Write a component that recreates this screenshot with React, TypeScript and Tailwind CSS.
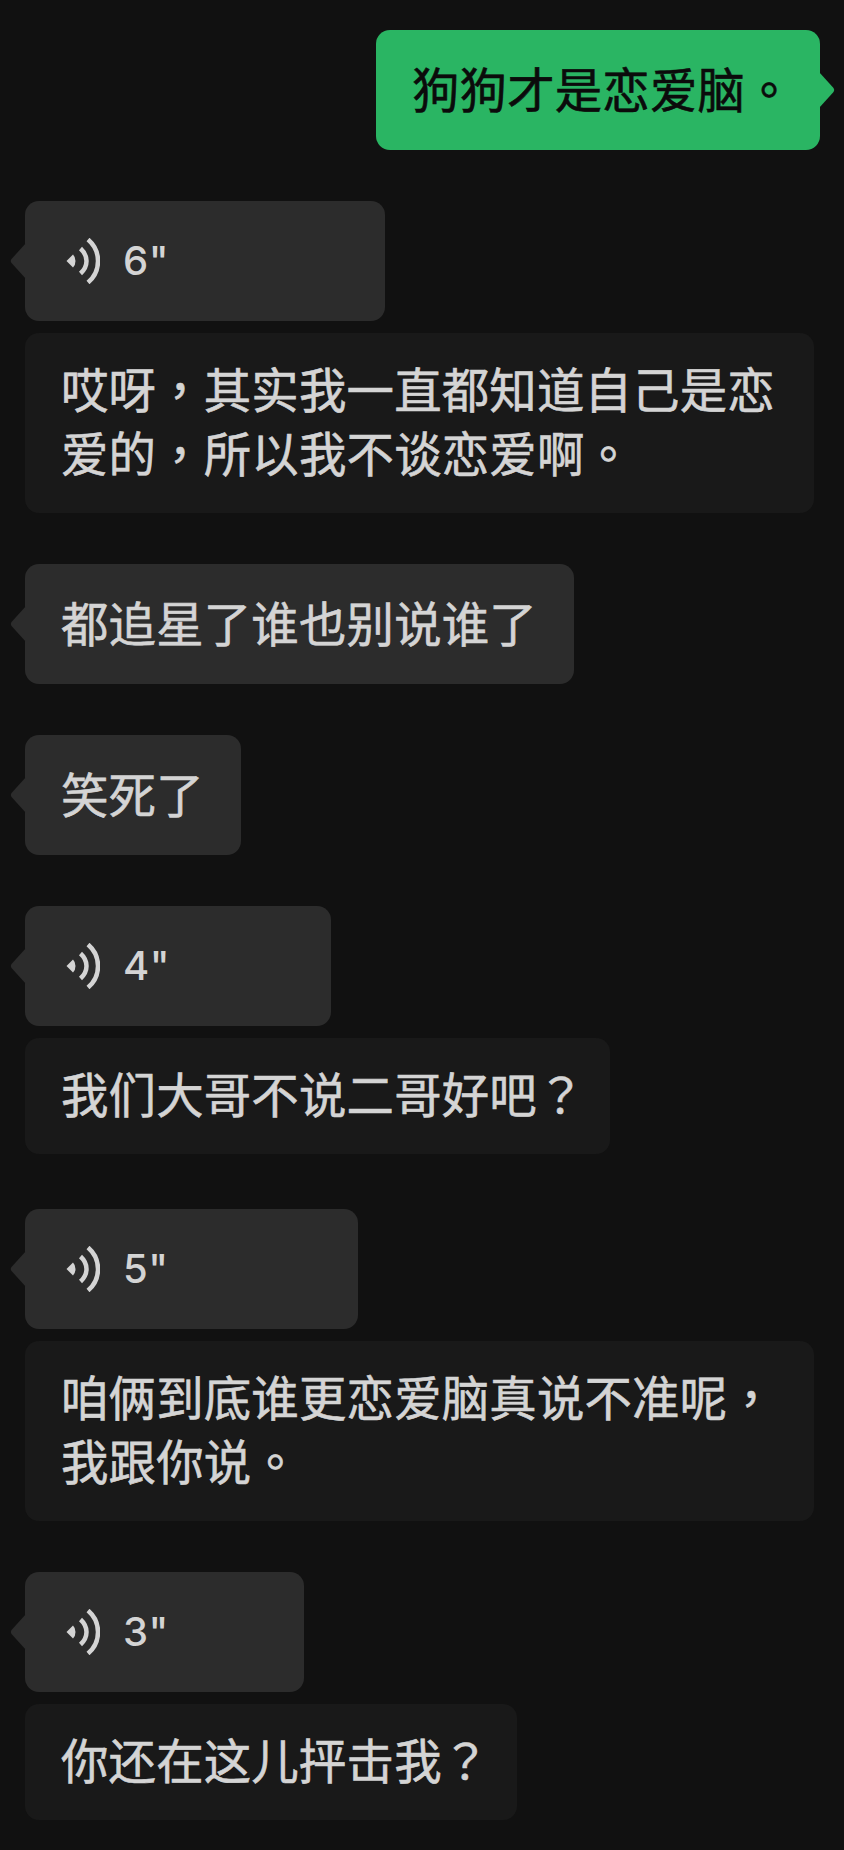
const font = { fontFamily: '"Noto Sans CJK SC", "Noto Sans", sans-serif' };

function Cjk({ text }: { text: string }) {
  const parts = text.split(/([，。？])/);
  return (
    <>
      {parts.map((p, i) =>
        /[，。？]/.test(p) ? (
          <span key={i} className="font-['Noto_Sans_CJK_TC']">{p}</span>
        ) : (
          <span key={i}>{p}</span>
        ),
      )}
    </>
  );
}

function Tail({ side, color }: { side: "left" | "right"; color: string }) {
  return (
    <svg
      width="16"
      height="36"
      viewBox="0 0 16 36"
      className={side === "left" ? "absolute left-[-15px] top-[42px]" : "absolute right-[-15px] top-[42px]"}
    >
      <path
        d={side === "left" ? "M16 0 L1.5 16 Q0 18 1.5 20 L16 36 Z" : "M0 0 L14.5 16 Q16 18 14.5 20 L0 36 Z"}
        fill={color}
      />
    </svg>
  );
}

function Voice({ seconds, width }: { seconds: string; width: string }) {
  return (
    <div className={`relative flex h-[120px] items-center rounded-[14px] bg-[#2c2c2c] pl-[41px] ${width}`}>
      <Tail side="left" color="#2c2c2c" />
      <svg width="34" height="46" viewBox="0 0 34 46" className="shrink-0" fill="none">
        <path d="M0.500 23 L7 16.500 Q9.500 19 9.500 23 Q9.500 27 7 29.500 Z" fill="#d4d4d4" />
        <path d="M14.500 10.500 Q20.500 16 20.500 23 Q20.500 30 14.500 35.500" stroke="#d4d4d4" strokeWidth="4.500" />
        <path d="M22 1.500 Q32 10 32 23 Q32 36 22 44.500" stroke="#d4d4d4" strokeWidth="4.500" />
      </svg>
      <span className="ml-[23px] font-['Inter'] text-[40px] font-medium leading-none tracking-[0.5px] text-[#d4d4d4]">
        {seconds}"
      </span>
    </div>
  );
}

function Text({ lines, width, height }: { lines: string[]; width: string; height: string }) {
  return (
    <div className={`flex flex-col justify-center rounded-[14px] bg-[#191919] pl-[36px] text-[47.400px] font-normal leading-[64px] tracking-[0.2px] text-[#d4d4d4] [-webkit-text-stroke:0.6px_#d4d4d4] ${width} ${height}`}>
      {lines.map((l) => (
        <div key={l} className="mt-[-3px] mb-[3px] whitespace-nowrap"><Cjk text={l} /></div>
      ))}
    </div>
  );
}

function Plain({ text, width }: { text: string; width: string }) {
  return (
    <div className={`relative flex h-[120px] items-center rounded-[14px] bg-[#2c2c2c] pb-[5px] pl-[36px] text-[47.400px] font-normal tracking-[0.2px] text-[#d4d4d4] [-webkit-text-stroke:0.6px_#d4d4d4] ${width}`}>
      <Tail side="left" color="#2c2c2c" />
      <span className="whitespace-nowrap"><Cjk text={text} /></span>
    </div>
  );
}

export default function App() {
  return (
    <div className="h-[1850px] w-[844px] overflow-hidden bg-[#111111] pl-[25px] pt-[30px]" style={font}>
      <div className="flex flex-col items-start">
        <div className="relative ml-[351px] flex h-[120px] w-[444px] items-center rounded-[14px] bg-[#2ab563] pb-[5px] pl-[36px] text-[47.400px] font-normal tracking-[0.2px] text-[#0b0b0b] [-webkit-text-stroke:0.6px_#0b0b0b]">
          <span className="whitespace-nowrap"><Cjk text="狗狗才是恋爱脑。" /></span>
          <Tail side="right" color="#2ab563" />
        </div>
        <div className="mt-[51px]"><Voice seconds="6" width="w-[360px]" /></div>
        <div className="mt-[12px]"><Text lines={["哎呀，其实我一直都知道自己是恋", "爱的，所以我不谈恋爱啊。"]} width="w-[789px]" height="h-[180px]" /></div>
        <div className="mt-[51px]"><Plain text="都追星了谁也别说谁了" width="w-[549px]" /></div>
        <div className="mt-[51px]"><Plain text="笑死了" width="w-[216px]" /></div>
        <div className="mt-[51px]"><Voice seconds="4" width="w-[306px]" /></div>
        <div className="mt-[12px]"><Text lines={["我们大哥不说二哥好吧？"]} width="w-[585px]" height="h-[116px]" /></div>
        <div className="mt-[55px]"><Voice seconds="5" width="w-[333px]" /></div>
        <div className="mt-[12px]"><Text lines={["咱俩到底谁更恋爱脑真说不准呢，", "我跟你说。"]} width="w-[789px]" height="h-[180px]" /></div>
        <div className="mt-[51px]"><Voice seconds="3" width="w-[279px]" /></div>
        <div className="mt-[12px]"><Text lines={["你还在这儿抨击我？"]} width="w-[492px]" height="h-[116px]" /></div>
      </div>
    </div>
  );
}
